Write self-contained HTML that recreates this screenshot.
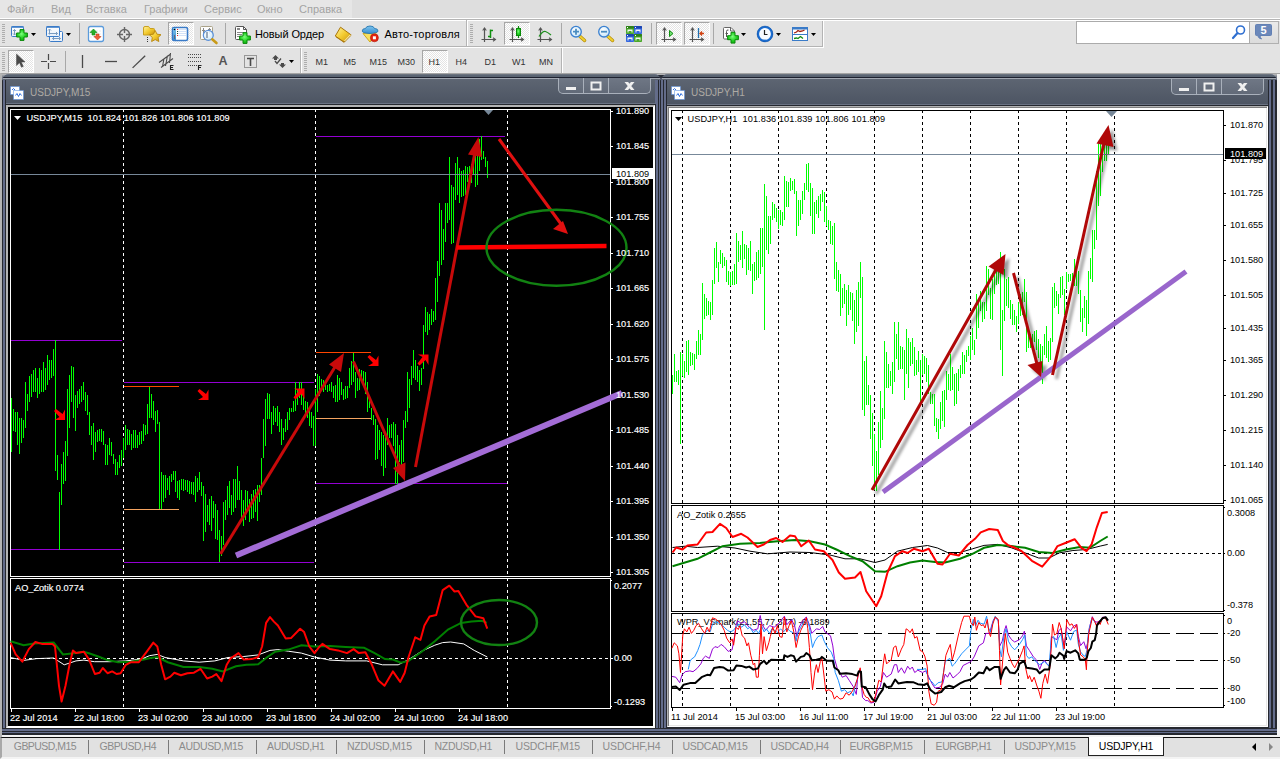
<!DOCTYPE html>
<html lang="ru"><head><meta charset="utf-8"><title>MetaTrader 4 - USDJPY</title>
<style>
html,body{margin:0;padding:0}
body{width:1280px;height:759px;overflow:hidden;position:relative;background:#e3e3e3;font-family:"Liberation Sans",sans-serif;font-size:11px;color:#000}
div,span,svg,i,b{position:absolute;box-sizing:border-box;font-style:normal}
#menubar{left:0;top:0;width:1280px;height:21px;background:linear-gradient(#dedede 18px,#fff 18px,#fff 19px,#b4b4b4 19px,#b4b4b4 20px,#fff 20px)}
#menubar .strip{left:0;top:0;width:352px;height:18px;background:#e6e6e6}
#menubar span{top:2px;font-size:11px;line-height:14px;color:#a3a3a3;white-space:nowrap}
.tb{background:#e3e3e3}
#tb1{left:0;top:20px;width:824px;height:28px;box-shadow:inset 0 1px 0 #fff,inset -1px -1px 0 #fff,inset -2px -2px 0 #b4b4b4}
#tb2{left:0;top:48px;width:563px;height:25px;box-shadow:inset -1px 0 0 #fff,inset -2px 0 0 #b4b4b4}
.grip{width:3px;height:19px;background:repeating-linear-gradient(to bottom,#adadad 0,#adadad 1px,transparent 1px,transparent 2px)}
.sep2{width:2px;background:linear-gradient(to right,#b4b4b4 1px,#fff 1px)}
.sep{width:1px;background:#a8a8a8}
.pressed{border:1px solid;border-color:#a6a6a6 #fff #fff #a6a6a6;background:repeating-conic-gradient(#fff 0 25%,#e4e4e4 0 50%) 0 0/2px 2px}
.lbl{font-size:11px;letter-spacing:0.1px;line-height:14px;white-space:nowrap;color:#000}
.tf{font-size:9px;line-height:12px;color:#333;white-space:nowrap}
.dd{width:0;height:0;border-left:3px solid transparent;border-right:3px solid transparent;border-top:3px solid #000}
#search{left:1076px;top:21px;width:174px;height:23px;background:#fff;border:1px solid #ababab}
#chatbtn{left:1250px;top:21px;width:29px;height:23px;background:linear-gradient(#eaeaea,#dcdcdc);border:1px solid #b0b0b0;border-left:none}
#chatbtn b{left:0;top:2px;width:27px;text-align:center;font-size:11px;line-height:12px;color:#fff}
#mdi{left:0;top:0;width:1280px;height:0}
#mdibg{left:0;top:73px;width:1280px;height:665px;background:#f4f4f4;border-top:1px solid #a4a4a4;border-bottom:1px solid #111;border-left:2px solid #b4b4b4}
.win{background:#636c8a;border-radius:7px 7px 0 0;overflow:hidden}
.win .bot{left:0;bottom:0;height:7px;background:linear-gradient(#25282f 0,#25282f 1px,#636c8a 1px,#636c8a 3px,#25282f 3px,#25282f 4px,#636c8a 4px,#636c8a 5px,#25282f 5px)}
.win .cap{background:linear-gradient(#7d838c 0,#5a6472 1px,#5a6472 3px,#1e2230 3px,#1e2230 4px,#a0a6b0 4px,#a0a6b0 5px,#5d6572 5px,#4d5563 calc(100% - 2px),#6a7282 calc(100% - 2px),#6a7282 calc(100% - 1px),#2a2e3a calc(100% - 1px));border-radius:7px 7px 0 0}
.win .ttl{top:12px;font-size:10px;line-height:13px;color:#aeaaa4;white-space:nowrap}
.win .btns{height:16px;border:1px solid #a9b0bb;border-top:none;border-radius:0 0 5px 5px;background:linear-gradient(#6f7785,#626a78)}
.win .btns i{top:0;bottom:0;width:1px;background:#a9b0bb}
.win .client{border:2px solid;border-color:#b4b4b4 #fff #fff #b4b4b4;box-shadow:0 0 0 1px #25282f;background:#000}
.win .client.lt{background:#fff;border-width:1px;padding:1px;box-shadow:inset 1px 1px 0 #808080,inset -1px -1px 0 #e6e6e6,0 0 0 1px #25282f}
.win .capline{height:0}
.chart{position:absolute;display:block}
.ic{position:absolute;display:block;overflow:visible}
#tabs{left:0;top:738px;width:1280px;height:21px;background:#e1e1e1;border-bottom:2px solid #f4f4f4;border-left:2px solid #a8a8a8}
#tabs span{top:2px;font-size:10.5px;letter-spacing:-0.35px;line-height:13px;color:#8b8b8b;white-space:nowrap}
#tabs i{top:2px;width:1px;height:14px;background:#7a7a7a}
#tabs .act{top:-1px;height:19px;letter-spacing:-0.24px;background:#fff;border:1px solid #222;border-top:none;color:#000;text-align:center;line-height:19px}
</style></head>
<body>
<div id="menubar"><div class="strip"></div>
<span style="left:7px;">Файл</span>
<span style="left:51px;">Вид</span>
<span style="left:86px;">Вставка</span>
<span style="left:144px;">Графики</span>
<span style="left:204px;">Сервис</span>
<span style="left:257px;">Окно</span>
<span style="left:299px;">Справка</span>
</div>
<div id="tb1" class="tb">
<div class="grip" style="left:2px;top:4px"></div>
<div class="sep" style="left:79px;top:3px;height:21px"></div>
<div class="pressed" style="left:168px;top:2px;width:26px;height:23px"></div>
<div class="sep" style="left:225px;top:3px;height:21px"></div>
<span class="lbl" style="left:255px;top:7px;letter-spacing:-0.1px">Новый Ордер</span>
<span class="lbl" style="left:384.500px;top:7px;letter-spacing:0.22px">Авто-торговля</span>
<div class="sep2" style="left:466px;top:0;height:26px"></div>
<div class="grip" style="left:470px;top:4px"></div>
<div class="pressed" style="left:504px;top:2px;width:26px;height:23px"></div>
<div class="sep" style="left:561px;top:3px;height:21px"></div>
<div class="sep" style="left:651px;top:3px;height:21px"></div>
<div class="pressed" style="left:656px;top:2px;width:26px;height:23px"></div>
<div class="pressed" style="left:684px;top:2px;width:26px;height:23px"></div>
<div class="sep" style="left:713px;top:3px;height:21px"></div>
</div>
<svg class="ic" width="825" height="27" viewBox="0 20 825 27" style="left:0;top:20px"><defs><radialGradient id="gp" cx="0.45" cy="0.4" r="0.7"><stop offset="0" stop-color="#7dff7d"/><stop offset="0.55" stop-color="#22d022"/><stop offset="1" stop-color="#0ea00e"/></radialGradient><linearGradient id="gw" x1="0" y1="0" x2="0" y2="1"><stop offset="0" stop-color="#ffffff"/><stop offset="1" stop-color="#e6eef8"/></linearGradient><linearGradient id="gy" x1="0" y1="0" x2="1" y2="1"><stop offset="0" stop-color="#fff2a0"/><stop offset="0.5" stop-color="#f4cc30"/><stop offset="1" stop-color="#c8900c"/></linearGradient><linearGradient id="gb" x1="0" y1="0" x2="0" y2="1"><stop offset="0" stop-color="#7cc4ee"/><stop offset="1" stop-color="#3a8fd0"/></linearGradient><radialGradient id="gl" cx="0.4" cy="0.35" r="0.8"><stop offset="0" stop-color="#ffffff"/><stop offset="1" stop-color="#bfe2f8"/></radialGradient></defs><rect x="11.500" y="26.500" width="12" height="10" rx="1" fill="url(#gw)" stroke="#3a7bc8"/><path d="M11.500 27H23.500" stroke="#3a7bc8" stroke-width="1.600"/><path d="M14.500 29.500v5.500M13 31l1.500-1.500l1.500 1.500M13 33.500l1.500 1.500l1.500-1.500" stroke="#7a9cc0" fill="none"/><path d="M20 29.6h4v3.4h3.4v4h-3.4v3.4h-4v-3.4h-3.4v-4h3.4z" fill="url(#gp)" stroke="#0c8a0c" stroke-width="1"/><path d="M31 33h5l-2.500 3z" fill="#000"/><rect x="49.500" y="31.500" width="13" height="10" rx="1" fill="url(#gw)" stroke="#3a7bc8"/><rect x="46.500" y="26.500" width="13" height="10" rx="1" fill="url(#gw)" stroke="#3a7bc8"/><path d="M46.500 27H59.500" stroke="#3a7bc8" stroke-width="1.600"/><path d="M49.500 29.500v5M48.500 33.500H57.500M48 30.500l1.500-1.500l1.500 1.500M56 32l1.500 1.500l-1.500 1.500M52.500 38.500h8M54 37l-1.500 1.500l1.500 1.500M59 37l1.500 1.500l-1.500 1.500" stroke="#7a9cc0" fill="none"/><path d="M66 33h5l-2.500 3z" fill="#000"/><rect x="88.500" y="26.500" width="15" height="15" rx="2" fill="#fff" stroke="#5b9bdc" stroke-width="1.300"/><path d="M90 31h12M90 34h12M90 37h12" stroke="#e4e8ee" stroke-dasharray="2 1"/><path d="M90 32.500l3.500-3.500l3.500 3.500h-2v2.500h-3v-2.500z" fill="#28b028" stroke="#108a10" stroke-width="0.600"/><path d="M94 36.500h2v-2.500h3v2.500h2l-3.500 3.500z" fill="#f06038" stroke="#c83810" stroke-width="0.600"/><circle cx="124.500" cy="34.500" r="5" fill="none" stroke="#666" stroke-width="1.400"/><path d="M124.500 27v6M124.500 36v6M117 34.500h6M126 34.500h6" stroke="#666" stroke-width="1.400"/><path d="M143.500 28q0-1.500 1.500-1.500h3q1 0 1.500 1l0.500 1h3.500q1 0 1 1v5.500h-11z" fill="url(#gy)" stroke="#c8a020"/><path d="M147.500 37v5" stroke="#333" stroke-dasharray="1 1"/><path d="M155.200 30.500l1.800 3.700l4 0.500l-2.900 2.800l0.700 4l-3.600-1.900l-3.600 1.900l0.700-4l-2.900-2.800l4-0.500z" fill="url(#gy)" stroke="#b8860b" stroke-width="0.900"/><rect x="172.500" y="27.500" width="15" height="13" rx="1.500" fill="#fff" stroke="#3a7bc8" stroke-width="1.600"/><rect x="173" y="28" width="3" height="12" fill="url(#gb)"/><circle cx="174.500" cy="29.500" r="0.800" fill="#000"/><path d="M174.500 35v4" stroke="#667"/><path d="M178 29.500h8M178 31.500h8M178 33.500h8M178 35.500h8" stroke="#d4e2f8"/><path d="M177 29.500h1M177 35.500h1" stroke="#f02020"/><path d="M177 31.500h1M177 33.500h1" stroke="#205020"/><rect x="200.500" y="26.500" width="12" height="13" rx="1" fill="#fdfdfd" stroke="#aaa288"/><path d="M203.500 28v9M209.500 28v6M202 30.500h3M208 29.500h3" stroke="#888"/><circle cx="208.300" cy="35.300" r="5" fill="url(#gl)" fill-opacity="0.900" stroke="#5a90d8" stroke-width="1.200"/><path d="M207 32v6" stroke="#9ab" stroke-width="2"/><path d="M212.200 39.300l4.300 3.700" stroke="#c89a18" stroke-width="2.600" stroke-linecap="round"/><path d="M235.500 27.500q0-1 1-1h7l3 3v9q0 1-1 1h-9q-1 0-1-1z" fill="#fff" stroke="#555"/><path d="M243.500 26.500v3h3" fill="none" stroke="#555"/><rect x="237" y="28" width="3" height="2" fill="#888"/><path d="M237 32.500h7M237 34.500h5M237 36.500h4" stroke="#888"/><path d="M243 32.6h4v3.4h3.4v4h-3.4v3.4h-4v-3.4h-3.4v-4h3.4z" fill="url(#gp)" stroke="#0c8a0c" stroke-width="1"/><path d="M340.500 27.200l10.500 7.600l-7 7.200l-8.700-6z" fill="url(#gy)" stroke="#a87408" stroke-linejoin="round"/><path d="M344.600 41.200l6-6.200" stroke="#fbeeb0" stroke-width="1.500"/><path d="M335.800 36.800l8.400 5.600l6.800-7" fill="none" stroke="#a87408" stroke-width="0.800"/><path d="M363 33.500l13.500-1l-6.500 9.500z" fill="#f8e060" stroke="#d0a818" stroke-linejoin="round"/><path d="M362.200 31q0-2.500 3.300-2.500q0.500-2.500 4.500-2.500t4.500 2.500q3.500 0 3.500 2.500q0 2-8 2.500q-7.800-0.500-7.800-2.500z" fill="url(#gb)" stroke="#2878b0" stroke-width="0.900"/><circle cx="374.400" cy="37.800" r="4" fill="#e42410" stroke="#b01808" stroke-width="0.600"/><rect x="372.900" y="36.300" width="3" height="3" fill="#fff"/><path d="M484.5 28.5V42M481.5 39.5H495.5" stroke="#555" stroke-width="1.200" fill="none"/><path d="M482.7 30.5l1.800 -2.500l1.800 2.500M493 37.7l2.500 1.800l-2.500 1.800" stroke="#555" stroke-width="1.100" fill="none"/><path d="M490.500 29.500V38M488 36.500h2.500M490.500 30.500h2.500" stroke="#109010" stroke-width="1.500" fill="none"/><path d="M512.5 28.5V42M509.5 39.5H523.5" stroke="#555" stroke-width="1.200" fill="none"/><path d="M510.7 30.5l1.800 -2.500l1.800 2.500M521 37.7l2.500 1.800l-2.500 1.800" stroke="#555" stroke-width="1.100" fill="none"/><path d="M518.500 26v12" stroke="#0a8a0a" stroke-width="1.200"/><rect x="516.500" y="28.500" width="4" height="7" fill="url(#gp)" stroke="#0a8a0a"/><path d="M540.5 28.5V42M537.5 39.5H551.5" stroke="#555" stroke-width="1.200" fill="none"/><path d="M538.7 30.5l1.800 -2.500l1.800 2.500M549 37.7l2.500 1.800l-2.500 1.800" stroke="#555" stroke-width="1.100" fill="none"/><path d="M539 36.500q4-6 6.500-5t5.500 3.500" fill="none" stroke="#209020" stroke-width="1.300"/><path d="M579.8 36.300l4.800 4.200" stroke="#b8900c" stroke-width="3.400" stroke-linecap="round"/><path d="M579.8 36.300l4.800 4.200" stroke="#f0d030" stroke-width="1.800" stroke-linecap="round"/><circle cx="576" cy="31.700" r="5.300" fill="url(#gl)" stroke="#3a80d0" stroke-width="1.300"/><path d="M573 31.700h6M576 28.700v6" stroke="#4a8cc0" stroke-width="1.800" fill="none"/><path d="M607.8 36.300l4.800 4.200" stroke="#b8900c" stroke-width="3.400" stroke-linecap="round"/><path d="M607.8 36.300l4.800 4.200" stroke="#f0d030" stroke-width="1.800" stroke-linecap="round"/><circle cx="604" cy="31.700" r="5.300" fill="url(#gl)" stroke="#3a80d0" stroke-width="1.300"/><path d="M601 31.700h6" stroke="#4a8cc0" stroke-width="1.800" fill="none"/><rect x="626" y="26" width="8" height="8" rx="0.800" fill="#4aa82a"/><rect x="626" y="26" width="8" height="2.500" rx="0.800" fill="#2e8018"/><path d="M627.5 29.5h5v3h-1v-1.500h-3v1.500h-1z" fill="#f4f8f4"/><rect x="627" y="27" width="1" height="1" fill="#fff"/><rect x="634" y="26" width="8" height="8" rx="0.800" fill="#3468e0"/><rect x="634" y="26" width="8" height="2.500" rx="0.800" fill="#1c44b0"/><path d="M635.5 29.5h5v3h-1v-1.500h-3v1.500h-1z" fill="#f4f8f4"/><rect x="635" y="27" width="1" height="1" fill="#fff"/><rect x="626" y="34" width="8" height="8" rx="0.800" fill="#3468e0"/><rect x="626" y="34" width="8" height="2.500" rx="0.800" fill="#1c44b0"/><path d="M627.5 37.5h5v3h-1v-1.500h-3v1.500h-1z" fill="#f4f8f4"/><rect x="627" y="35" width="1" height="1" fill="#fff"/><rect x="634" y="34" width="8" height="8" rx="0.800" fill="#4aa82a"/><rect x="634" y="34" width="8" height="2.500" rx="0.800" fill="#2e8018"/><path d="M635.5 37.5h5v3h-1v-1.500h-3v1.500h-1z" fill="#f4f8f4"/><rect x="635" y="35" width="1" height="1" fill="#fff"/><path d="M664.5 28.5V42M661.5 39.5H675.5" stroke="#555" stroke-width="1.200" fill="none"/><path d="M662.7 30.5l1.800 -2.500l1.800 2.500M673 37.7l2.500 1.800l-2.500 1.800" stroke="#555" stroke-width="1.100" fill="none"/><path d="M669.500 30.500l3.500 3l-3.500 3z" fill="#70e070" stroke="#109010"/><path d="M692.5 28.5V42M689.5 39.5H703.5" stroke="#555" stroke-width="1.200" fill="none"/><path d="M690.7 30.5l1.800 -2.500l1.800 2.500M701 37.7l2.500 1.800l-2.500 1.800" stroke="#555" stroke-width="1.100" fill="none"/><path d="M698.500 28v10" stroke="#2070b0" stroke-width="1.300"/><path d="M704 33.500h-4M702 31.500l-2 2l2 2" fill="none" stroke="#d04010" stroke-width="1.300"/><path d="M723.500 28.500q0-1 1-1h6.500l3.500 3.500v7q0 1-1 1h-9q-1 0-1-1z" fill="#fff" stroke="#666"/><path d="M730.500 27.500v3.500h3.500" fill="none" stroke="#666"/><path d="M728.500 30q-2-0.500-2 1.500v5.500M725.500 33.500h2.500" fill="none" stroke="#555"/><path d="M731 32.3h4v3.4h3.4v4h-3.4v3.4h-4v-3.4h-3.4v-4h3.4z" fill="url(#gp)" stroke="#0c8a0c" stroke-width="1"/><path d="M741 33h5l-2.500 3z" fill="#000"/><circle cx="765" cy="34" r="7" fill="#f8fbff" stroke="#1a6cd0" stroke-width="2.200"/><circle cx="765" cy="34" r="7.900" fill="none" stroke="#0c4ca0" stroke-width="0.500"/><path d="M764.500 30v4.500h3" fill="none" stroke="#222" stroke-width="1.200"/><path d="M765 39v1" stroke="#6aa0e0"/><path d="M776 33h5l-2.500 3z" fill="#000"/><rect x="792.500" y="27.500" width="15" height="13" fill="#fff" stroke="#3a7bc8"/><rect x="792" y="27" width="16" height="2.500" fill="#3a7bc8"/><path d="M793 34.500h14" stroke="#3a7bc8"/><path d="M794 33l2.500-1l1.500-1.500l2 1l2.500-0.500l2-1" fill="none" stroke="#a02010" stroke-width="1.300"/><path d="M794 38.500l2.500-0.500l1.500 0.500l2.500-2l2.500 2" fill="none" stroke="#108a10" stroke-width="1.300"/><path d="M811 33h5l-2.500 3z" fill="#000"/></svg>
<div id="search"><svg class="ic" width="14" height="14" viewBox="0 0 14 14" style="left:155px;top:3px"><circle cx="8.500" cy="5" r="4" fill="#fff" stroke="#2f6fd0" stroke-width="1.600"/><path d="M5.500 8l-4.500 5" stroke="#2f6fd0" stroke-width="2.200" stroke-linecap="round"/></svg></div>
<div id="chatbtn"><svg class="ic" width="17" height="16" viewBox="0 0 17 16" style="left:5px;top:2px"><path d="M1.500 0.500h14q1 0 1 1v9q0 1-1 1h-10.500q0 2 1.500 3.500q-3-0.500-4-3.500h-1q-1 0-1-1v-9q0-1 1-1z" fill="#6b88ba" stroke="#6280b4"/></svg><b>5</b></div>
<div id="tb2" class="tb">
<div class="grip" style="left:2px;top:4px"></div>
<div class="pressed" style="left:8px;top:2px;width:26px;height:23px"></div>
<div class="sep" style="left:65px;top:3px;height:21px"></div>
<span class="lbl" style="left:218.500px;top:6px;font-weight:bold;color:#555;font-size:12.500px;line-height:15px">A</span>
<div class="sep2" style="left:300px;top:0;height:26px"></div>
<div class="grip" style="left:304px;top:4px"></div>
<div class="pressed" style="left:422px;top:2px;width:26px;height:23px"></div>
<span class="tf" style="left:315.5px;top:8px">M1</span>
<span class="tf" style="left:343.5px;top:8px">M5</span>
<span class="tf" style="left:369.5px;top:8px">M15</span>
<span class="tf" style="left:397.5px;top:8px">M30</span>
<span class="tf" style="left:428.5px;top:8px">H1</span>
<span class="tf" style="left:455.5px;top:8px">H4</span>
<span class="tf" style="left:484.5px;top:8px">D1</span>
<span class="tf" style="left:512px;top:8px">W1</span>
<span class="tf" style="left:539px;top:8px">MN</span>
</div>
<svg class="ic" width="562" height="26" viewBox="0 48 562 26" style="left:0;top:48px"><path d="M16.500 54v11.500l3-2.800l2 4.500l1.800-0.800l-2-4.400h3.700z" fill="#4a4a4a" stroke="#4a4a4a" stroke-width="0.500"/><path d="M48.500 54v6M48.500 63v6M41 61.500h6M50 61.500h6" stroke="#4a4a4a" stroke-width="1.200"/><path d="M82.500 55v13" stroke="#4a4a4a" stroke-width="1.300"/><path d="M105 61.500h12" stroke="#4a4a4a" stroke-width="1.300"/><path d="M132.600 67.900L145.200 55.800" stroke="#4a4a4a" stroke-width="1.300"/><path d="M159 62.500l11-8M161 67.500l12-9M162.500 66.500l1.500-8M165.500 66l2-10.500M169.500 63l1-10" stroke="#4a4a4a" fill="none" stroke-width="1.100"/><path d="M173.500 65.500h-3v4h3M170.500 67.500h2.500" stroke="#222" stroke-width="1.100" fill="none"/><path d="M188 54.500h13M188 57.500h13M188 61.500h13M188 65.500h9" stroke="#4a4a4a" stroke-dasharray="1 1"/><path d="M201.500 65.500h-3v4.500M198.500 67.500h2.500" stroke="#222" stroke-width="1.100" fill="none"/><rect x="244.500" y="55.500" width="12" height="12" fill="none" stroke="#4a4a4a" stroke-dasharray="1 1"/><path d="M247 58.500h7M250.500 58.500v7.500" stroke="#4a4a4a" stroke-width="1.600"/><path d="M275.500 55l3.500 3.500h-2v1.500h-3v-1.500h-2z" fill="#4a4a4a"/><path d="M275 61l2 2.500l4-5" stroke="#4a4a4a" stroke-width="1.300" fill="none"/><path d="M282.500 68l3.500-3.500h-2v-1.500h-3v1.500h-2z" fill="#4a4a4a"/><path d="M289 60h5l-2.500 3z" fill="#000"/></svg>
<div id="mdibg"><div style="left:0;top:0;width:1275px;height:10px;background:linear-gradient(#c0c0c0,#8a8e96 2px,#6a707c 4px)"></div><div style="left:655px;top:1px;width:10px;height:9px;background:#2a2e38"></div></div>
<div id="mdi">
<div class="win" style="left:2px;top:74px;width:659px;height:661px"><div class="cap" style="left:0;top:0;width:659px;height:31px"></div><div class="capline" style="left:1px;top:3px;width:657px"></div><div class="stripe" style="left:0;top:6px;width:4px;height:654px;background:linear-gradient(to right,#25282f 0px,#25282f 1px,#636c8a 1px,#636c8a 2px,#636c8a 2px,#636c8a 3px,#25282f 3px,#25282f 4px)"></div><div class="stripe" style="left:653px;top:6px;width:6px;height:654px;background:linear-gradient(to right,#636c8a 0px,#636c8a 1px,#636c8a 1px,#636c8a 2px,#636c8a 2px,#636c8a 3px,#25282f 3px,#25282f 4px,#636c8a 4px,#636c8a 5px,#25282f 5px,#25282f 6px)"></div><svg class="ic" width="14" height="14" viewBox="0 0 14 14" style="left:8px;top:12px"><rect x="0.5" y="0.5" width="9" height="8" fill="#fff" stroke="#4a86e0" stroke-dasharray="1 1"/><rect x="3.5" y="4.5" width="10" height="9" fill="#fff" stroke="#4a86e0" stroke-dasharray="1 1"/><path d="M2 4l1.500-1.500l1.500 1.500M5.500 9.500l1.500-2l1.500 3l1.500-3l1.500 2" fill="none" stroke="#2f6fe0"/></svg><div class="ttl" style="left:28px">USDJPY,M15</div><div class="btns" style="left:556px;top:4px;width:93px"><i style="left:24px"></i><i style="left:49px"></i><svg class="ic" width="92" height="16" viewBox="0 0 92 16" style="left:0;top:0"><path d="M7 9h10v3h-10z" fill="#f0f0f0"/><path d="M32.500 4.500h9v7h-9z" fill="none" stroke="#f0f0f0" stroke-width="2"/><path d="M65.500 4h3.600l6.400 8h-3.600zM71.900 4h3.600l-6.400 8h-3.600z" fill="#f0f0f0"/></svg></div><div class="bot" style="width:659px"></div><div class="client" style="left:4px;top:31px;width:649px;height:623px"></div></div>
<div class="win" style="left:661px;top:74px;width:616px;height:661px"><div class="cap" style="left:0;top:0;width:616px;height:32px"></div><div class="capline" style="left:1px;top:3px;width:614px"></div><div class="stripe" style="left:0;top:6px;width:6px;height:654px;background:linear-gradient(to right,#636c8a 0px,#636c8a 1px,#636c8a 1px,#636c8a 2px,#25282f 2px,#25282f 3px,#636c8a 3px,#636c8a 4px,#636c8a 4px,#636c8a 5px,#25282f 5px,#25282f 6px)"></div><div class="stripe" style="left:607px;top:6px;width:9px;height:654px;background:linear-gradient(to right,#25282f 0px,#25282f 1px,#636c8a 1px,#636c8a 2px,#636c8a 2px,#636c8a 3px,#25282f 3px,#25282f 4px,#25282f 4px,#25282f 5px,#636c8a 5px,#636c8a 6px,#636c8a 6px,#636c8a 7px,#25282f 7px,#25282f 8px,#25282f 8px,#25282f 9px)"></div><svg class="ic" width="14" height="14" viewBox="0 0 14 14" style="left:10px;top:12px"><rect x="0.5" y="0.5" width="9" height="8" fill="#fff" stroke="#4a86e0" stroke-dasharray="1 1"/><rect x="3.5" y="4.5" width="10" height="9" fill="#fff" stroke="#4a86e0" stroke-dasharray="1 1"/><path d="M2 4l1.500-1.500l1.500 1.500M5.500 9.500l1.500-2l1.500 3l1.500-3l1.500 2" fill="none" stroke="#2f6fe0"/></svg><div class="ttl" style="left:30px">USDJPY,H1</div><div class="btns" style="left:510px;top:5px;width:93px"><i style="left:24px"></i><i style="left:49px"></i><svg class="ic" width="92" height="16" viewBox="0 0 92 16" style="left:0;top:0"><path d="M7 9h10v3h-10z" fill="#f0f0f0"/><path d="M32.500 4.500h9v7h-9z" fill="none" stroke="#f0f0f0" stroke-width="2"/><path d="M65.500 4h3.600l6.400 8h-3.600zM71.900 4h3.600l-6.400 8h-3.600z" fill="#f0f0f0"/></svg></div><div class="bot" style="width:616px"></div><div class="client lt" style="left:6px;top:32px;width:601px;height:621px"></div></div>
</div>
<svg class="chart" width="645" height="619" viewBox="8 107 645 619" style="left:8px;top:107px">
<rect x="8" y="107" width="645" height="619" fill="#000"/>
<g shape-rendering="crispEdges" fill="none">
<path d="M123.5 109V576M123.5 578V708" stroke="#fff" stroke-dasharray="3 3"/>
<path d="M315.5 109V576M315.5 578V708" stroke="#fff" stroke-dasharray="3 3"/>
<path d="M507.5 109V576M507.5 578V708" stroke="#fff" stroke-dasharray="3 3"/>
<path d="M10.5 109.5H610.5V576.5H10.5ZM10.5 578.5H610.5V708.5H10.5Z" stroke="#fff"/>
<path d="M611 111.5h2M611 146.5h2M611 182.5h2M611 217.5h2M611 253.5h2M611 288.5h2M611 324.5h2M611 359.5h2M611 395.5h2M611 430.5h2M611 466.5h2M611 501.5h2M611 537.5h2M611 572.5h2M611 580.5h1M611 658.5h2M611 706.5h1M11.5 709v3M75.5 709v3M139.5 709v3M203.5 709v3M267.5 709v3M331.5 709v3M395.5 709v3M459.5 709v3" stroke="#fff"/>
<path d="M11 340.5H122M11 549.5H122M124 382.5H314M124 562.5H314M316 136.5H505M316 483.5H507" stroke="#9400d3"/>
<path d="M124 386.5H179M316 352.5H371" stroke="#ff4500"/>
<path d="M124 509.5H179M316 418.5H371" stroke="#f4a460"/>
<path d="M11.5 398V452M13.5 409V431M15.5 412V432M17.5 412V445M19.5 418V454M21.5 418V443M23.5 420V438M25.5 382V428M27.5 394V411M29.5 376V402M31.5 374V397M33.5 370V392M35.5 368V392M37.5 378V398M39.5 368V394M41.5 370V392M43.5 362V392M45.5 368V390M47.5 355V385M49.5 360V380M51.5 360V378M53.5 349V376M55.5 340V471M57.5 455V480M59.5 492V550M61.5 464V505M63.5 452V484M65.5 441V481M67.5 389V456M69.5 375V428M71.5 366V402M73.5 367V418M75.5 395V431M77.5 391V408M79.5 389V404M81.5 386V402M83.5 382V400M85.5 392V411M87.5 395V415M89.5 412V435M91.5 426V445M93.5 423V460M95.5 432V452M97.5 430V442M99.5 429V441M101.5 429V442M103.5 431V445M105.5 444V465M107.5 445V465M109.5 438V455M111.5 442V456M113.5 454V464M115.5 459V475M117.5 462V475M119.5 455V468M121.5 450V466M123.5 438V458M125.5 425V450M127.5 429V445M129.5 430V445M131.5 434V450M133.5 430V448M135.5 430V448M137.5 435V448M139.5 432V445M141.5 431V444M143.5 424V441M145.5 425V435M147.5 404V434M149.5 387V418M151.5 394V418M153.5 401V420M155.5 411V432M157.5 410V424M159.5 422V509M161.5 472V509M163.5 475V502M165.5 475V498M167.5 478V490M169.5 476V495M171.5 474V482M173.5 471V480M175.5 471V492M177.5 481V498M179.5 480V500M181.5 479V490M183.5 479V491M185.5 480V490M187.5 480V492M189.5 481V494M191.5 482V494M193.5 482V495M195.5 476V502M197.5 478V492M199.5 472V490M201.5 482V496M203.5 486V541M205.5 494V532M207.5 505V522M209.5 499V525M211.5 496V531M213.5 501V518M215.5 504V539M217.5 510V540M219.5 530V562M221.5 536V556M223.5 502V545M225.5 500V520M227.5 486V515M229.5 481V508M231.5 495V515M233.5 479V512M235.5 479V508M237.5 466V500M239.5 481V500M241.5 490V520M243.5 500V526M245.5 490V520M247.5 491V510M249.5 499V522M251.5 494V519M253.5 490V518M255.5 489V512M257.5 485V521M259.5 485V502M261.5 458V495M263.5 419V458M265.5 399V446M267.5 393V419M269.5 394V419M271.5 412V434M273.5 406V425M275.5 408V422M277.5 406V426M279.5 412V432M281.5 419V445M283.5 428V440M285.5 419V432M287.5 412V430M289.5 408V420M291.5 408V412M293.5 401V412M295.5 382V411M297.5 389V405M299.5 382V398M301.5 382V405M303.5 396V410M305.5 401V415M307.5 402V418M309.5 410V426M311.5 412V428M313.5 416V446M315.5 389V446M317.5 374V412M319.5 376V396M321.5 379V391M323.5 380V392M325.5 384V390M327.5 385V392M329.5 384V391M331.5 382V392M333.5 386V398M335.5 385V402M337.5 375V402M339.5 378V400M341.5 382V395M343.5 389V400M345.5 386V399M347.5 386V398M349.5 368V388M351.5 361V385M353.5 353V382M355.5 372V398M357.5 378V391M359.5 369V390M361.5 370V382M363.5 371V385M365.5 372V394M367.5 382V412M369.5 400V408M371.5 408V420M373.5 415V425M375.5 419V460M377.5 425V459M379.5 430V450M381.5 432V466M383.5 435V476M385.5 432V468M387.5 418V445M389.5 425V438M391.5 424V438M393.5 422V446M395.5 424V484M397.5 435V484M399.5 445V462M401.5 440V468M403.5 420V462M405.5 411V428M407.5 372V422M409.5 379V408M411.5 366V385M413.5 350V378M415.5 360V380M417.5 366V382M419.5 370V391M421.5 368V385M423.5 325V369M425.5 307V332M427.5 312V335M429.5 314V330M431.5 309V325M433.5 311V322M435.5 278V320M437.5 261V302M439.5 203V276M441.5 210V265M443.5 229V260M445.5 203V242M447.5 203V223M449.5 157V220M451.5 185V244M453.5 187V243M455.5 163V200M457.5 157V195M459.5 168V203M461.5 171V197M463.5 170V196M465.5 166V195M467.5 167V182M469.5 166V178M471.5 164V183M473.5 158V175M475.5 153V187M477.5 152V185M479.5 139V171M481.5 136V160M483.5 151V159M485.5 157V167M487.5 161V178" stroke="#00ff00"/>
<path d="M11 174.5H610" stroke="#778899"/>
<path d="M11 658.5H610" stroke="#fff" stroke-dasharray="3 3"/>
</g>
<path d="M484 110h9l-4.5 5z" fill="#778899"/>
<polyline points="10.5,657.5 23.6,660.4 36.7,658.6 53.7,658 64.2,664.8 76,660.9 83.9,660.1 94.4,661.7 110.1,661.7 125.8,660.9 141.5,659.1 149.4,655.7 157.3,654.4 165.1,657.5 183.5,660.9 199.2,662.2 214.9,660.9 228,657.5 243.8,656.5 258.2,654.9 270,650.4 277.9,649.6 288.3,651.2 301.4,653.1 314.5,657 330,660.1 345.7,660.9 366.7,660.9 382.4,664.8 398.2,664.8 408.6,659.6 421.7,651.2 434.8,645.2 442.7,642.6 450.6,642 463.7,643.9 474.2,650.4 487.3,657" fill="none" stroke="#fff" stroke-width="1"/>
<polyline points="10.5,641.3 23.6,645.2 34.1,643.4 53.7,642.6 62.9,654.4 76,653.1 83.9,651.7 90.4,653.8 99.6,657 107.5,660.1 118,662.2 131.1,661.7 141.5,660.1 149.4,658.3 157.3,657 167.8,662.2 183.5,666.9 199.2,666.9 212.3,668.8 222.8,671.4 235.9,666.2 246.4,664.8 258.2,664.3 267.4,657 275.2,651.7 288.3,649.6 301.4,645.2 314.5,646.5 330,646 345.7,647 364.1,647.8 374.6,653.1 385,659.1 392.9,659.6 400.8,662.8 408.6,660.9 421.7,651.7 434.8,641.3 448,629.5 461.1,622.9 471.5,621.6 482,620.8 486.7,622.9" fill="none" stroke="#008000" stroke-width="2"/>
<polyline points="10.5,642.6 15.7,654.4 22.3,661.7 28.8,649.1 35.4,642 41.9,643.9 52.4,643.9 55,646.5 59,685.8 61.6,701.5 65.5,685.8 69.5,664.8 72.9,650.4 76,653.1 83.9,651.7 89.1,659.6 94.9,674 99.6,672.7 102.8,668 107.5,673.2 112.2,671.4 116.6,674 120.6,673.2 125.8,664.8 131.1,662.2 138.9,662.2 146.8,651.7 153.3,642.6 157.3,646.5 161.2,664.8 165.1,679.3 170.4,676.6 174.3,672.7 180.9,675.3 187.4,673.2 194,672.7 200.5,668.8 207.1,678.5 212.3,676.6 216.3,674 221.5,681.1 226.7,664.8 230.7,658.3 238.5,653.1 243.8,659.6 251.6,659.1 258.2,657 262.1,646.5 266.1,622.9 270,617.1 273.9,621.6 277.9,625.5 285.7,638.6 291,638.1 300.1,628.7 304.1,632.1 309.3,646.5 314.5,653.1 318.5,647.8 322.4,643.9 330,649.1 337.9,650.4 347,653.1 353.6,649.1 358.8,653.1 365.4,652.3 371.9,664.8 378.5,680.6 384.5,685.8 392.9,671.4 400.2,681.9 404.7,672.7 408.6,657 415.2,637.3 420.4,639.9 424.4,625.5 429.6,616.4 436.2,615 442.7,590.1 449.3,585.7 454.5,591.5 458.4,590.9 466.3,604.6 475.5,616.4 483.3,618.2 487.3,628.7" fill="none" stroke="#ff0000" stroke-width="2" stroke-linejoin="round"/>
<g fill="#ff0000">
<path transform="translate(59.5 414.5) rotate(0)" d="M5.500 5.500V-5L3 -0.500L-3.500 -5.500L-5.500 -3.500L0 2.500L-5 5.500Z"/>
<path transform="translate(203 394.5) rotate(0)" d="M5.500 5.500V-5L3 -0.500L-3.500 -5.500L-5.500 -3.500L0 2.500L-5 5.500Z"/>
<path transform="translate(373 360.5) rotate(0)" d="M5.500 5.500V-5L3 -0.500L-3.500 -5.500L-5.500 -3.500L0 2.500L-5 5.500Z"/>
<path transform="translate(299 394) rotate(-90)" d="M5.500 5.500V-5L3 -0.500L-3.500 -5.500L-5.500 -3.500L0 2.500L-5 5.500Z"/>
<path transform="translate(423 360) rotate(-90)" d="M5.500 5.500V-5L3 -0.500L-3.500 -5.500L-5.500 -3.500L0 2.500L-5 5.500Z"/>
</g>
<g stroke-linecap="butt">
<path d="M236 555.5L622 393" stroke="#a36cd6" stroke-width="6" fill="none"/>
<path d="M220.5 554L338 362" stroke="#c80a0a" stroke-width="3" fill="none"/>
<path d="M344 353l-3 19l-12-7.5z" fill="#c80a0a"/>
<path d="M353.5 361.5L402 472" stroke="#c80a0a" stroke-width="3" fill="none"/>
<path d="M405 481l-12-13l12.500-5.500z" fill="#c80a0a"/>
<path d="M415.500 467L475 152" stroke="#c80a0a" stroke-width="3" fill="none"/>
<path d="M478.500 137l3.500 20l-14-2.500z" fill="#c80a0a"/>
<path d="M499 139L561 224" stroke="#e01010" stroke-width="3" fill="none"/>
<path d="M568 234l-15-5l10-8z" fill="#e01010"/>
<path d="M456.500 247.500L606.500 246" stroke="#ff0000" stroke-width="4.500" fill="none"/>
<ellipse cx="556.500" cy="247.800" rx="70" ry="38" stroke="#128212" stroke-width="2.400" fill="none"/>
<ellipse cx="499" cy="622.500" rx="38" ry="22.500" stroke="#128212" stroke-width="2.400" fill="none"/>
</g>
<g fill="#fff" stroke="#fff" stroke-width="0.15" style="font-family:'Liberation Sans',sans-serif;font-size:9.2px;white-space:pre">
<path d="M14 116h7l-3.500 4z" stroke="none"/>
<text xml:space="preserve" x="26.400" y="121" textLength="203.300">USDJPY,M15  101.824 101.826 101.806 101.809</text>
<text xml:space="preserve" x="15" y="591">AO_Zotik 0.0774</text>
<text xml:space="preserve" x="616" y="114.3">101.890</text>
<text xml:space="preserve" x="616" y="149.3">101.845</text>
<text xml:space="preserve" x="616" y="185.3">101.800</text>
<text xml:space="preserve" x="616" y="220.3">101.755</text>
<text xml:space="preserve" x="616" y="256.3">101.710</text>
<text xml:space="preserve" x="616" y="291.3">101.665</text>
<text xml:space="preserve" x="616" y="327.3">101.620</text>
<text xml:space="preserve" x="616" y="362.3">101.575</text>
<text xml:space="preserve" x="616" y="398.3">101.530</text>
<text xml:space="preserve" x="616" y="433.3">101.485</text>
<text xml:space="preserve" x="616" y="469.3">101.440</text>
<text xml:space="preserve" x="616" y="504.3">101.395</text>
<text xml:space="preserve" x="616" y="540.3">101.350</text>
<text xml:space="preserve" x="616" y="575.3">101.305</text>
<text xml:space="preserve" x="614" y="589.3">0.2077</text>
<text xml:space="preserve" x="614" y="661.3">0.00</text>
<text xml:space="preserve" x="614" y="705.3">-0.1293</text>
<text xml:space="preserve" x="10" y="721.3">22 Jul 2014</text>
<text xml:space="preserve" x="74" y="721.3">22 Jul 18:00</text>
<text xml:space="preserve" x="138" y="721.3">23 Jul 02:00</text>
<text xml:space="preserve" x="202" y="721.3">23 Jul 10:00</text>
<text xml:space="preserve" x="266" y="721.3">23 Jul 18:00</text>
<text xml:space="preserve" x="330" y="721.3">24 Jul 02:00</text>
<text xml:space="preserve" x="394" y="721.3">24 Jul 10:00</text>
<text xml:space="preserve" x="458" y="721.3">24 Jul 18:00</text>
</g>
<rect x="612" y="168" width="41" height="11" fill="#fff"/>
<text xml:space="preserve" x="616" y="177.3" fill="#000" style="font-family:'Liberation Sans',sans-serif;font-size:9.2px;white-space:pre">101.809</text>
</svg>
<svg class="chart" width="597" height="617" viewBox="669 108 597 617" style="left:669px;top:108px">
<rect x="669" y="108" width="597" height="617" fill="#fff"/>
<g shape-rendering="crispEdges" fill="none">
<path d="M682.5 110V503M682.5 505V611M682.5 613V707" stroke="#000" stroke-dasharray="3 3"/>
<path d="M730.5 110V503M730.5 505V611M730.5 613V707" stroke="#000" stroke-dasharray="3 3"/>
<path d="M778.5 110V503M778.5 505V611M778.5 613V707" stroke="#000" stroke-dasharray="3 3"/>
<path d="M826.5 110V503M826.5 505V611M826.5 613V707" stroke="#000" stroke-dasharray="3 3"/>
<path d="M874.5 110V503M874.5 505V611M874.5 613V707" stroke="#000" stroke-dasharray="3 3"/>
<path d="M922.5 110V503M922.5 505V611M922.5 613V707" stroke="#000" stroke-dasharray="3 3"/>
<path d="M970.5 110V503M970.5 505V611M970.5 613V707" stroke="#000" stroke-dasharray="3 3"/>
<path d="M1018.5 110V503M1018.5 505V611M1018.5 613V707" stroke="#000" stroke-dasharray="3 3"/>
<path d="M1066.5 110V503M1066.5 505V611M1066.5 613V707" stroke="#000" stroke-dasharray="3 3"/>
<path d="M1114.5 110V503M1114.5 505V611M1114.5 613V707" stroke="#000" stroke-dasharray="3 3"/>
<path d="M671.5 110.5H1223.5V503.5H671.5ZM671.5 505.5H1223.5V611.5H671.5ZM671.5 613.5H1223.5V707.5H671.5Z" stroke="#000"/>
<path d="M1224 125.5h2M1224 160.5h2M1224 193.5h2M1224 225.5h2M1224 260.5h2M1224 295.5h2M1224 328.5h2M1224 360.5h2M1224 395.5h2M1224 430.5h2M1224 465.5h2M1224 500.5h2M1224 507.5h1M1224 553.5h1M1224 610.5h1M1224 615.5h1M1224 633.5h1M1224 660.5h1M1224 688.5h1M1224 705.5h1M672.5 708v3M736.5 708v3M800.5 708v3M864.5 708v3M928.5 708v3M992.5 708v3M1056.5 708v3" stroke="#000"/>
<path d="M672.5 375V394M674.5 354V382M676.5 371V382M678.5 370V385M680.5 352V444M682.5 354V376M684.5 361V378M686.5 341V372M688.5 340V375M690.5 352V366M692.5 353V365M694.5 354V370M696.5 341V359M698.5 330V355M700.5 334V355M702.5 283V340M704.5 294V319M706.5 298V316M708.5 301V315M710.5 302V320M712.5 280V315M714.5 248V284M716.5 242V268M718.5 262V282M720.5 250V264M722.5 253V268M724.5 257V266M726.5 260V282M728.5 271V285M730.5 272V286M732.5 271V285M734.5 264V285M736.5 233V284M738.5 241V262M740.5 245V260M742.5 231V268M744.5 244V259M746.5 245V275M748.5 248V270M750.5 241V271M752.5 264V294M754.5 262V281M756.5 252V280M758.5 250V278M760.5 228V274M762.5 228V267M764.5 184V330M766.5 196V250M768.5 216V254M770.5 216V244M772.5 202V220M774.5 204V218M776.5 208V222M778.5 210V229M780.5 210V225M782.5 212V226M784.5 176V220M786.5 181V207M788.5 182V207M790.5 178V191M792.5 181V190M794.5 179V194M796.5 191V236M798.5 200V226M800.5 200V220M802.5 191V214M804.5 183V200M806.5 164V190M808.5 163V192M810.5 183V216M812.5 188V234M814.5 202V234M816.5 200V214M818.5 196V218M820.5 194V211M822.5 190V202M824.5 192V222M826.5 206V226M828.5 220V230M830.5 221V244M832.5 226V245M834.5 223V279M836.5 262V291M838.5 270V292M840.5 274V316M842.5 288V308M844.5 284V304M846.5 290V326M848.5 285V315M850.5 292V310M852.5 293V321M854.5 300V344M856.5 290V332M858.5 282V326M860.5 262V298M862.5 277V410M864.5 361V416M866.5 356V405M868.5 385V405M870.5 395V439M872.5 413V466M874.5 434V490M876.5 451V491M878.5 422V475M880.5 391V448M882.5 408V440M884.5 341V419M886.5 352V388M888.5 364V388M890.5 371V386M892.5 362V394M894.5 322V382M896.5 334V359M898.5 322V370M900.5 346V369M902.5 347V369M904.5 350V400M906.5 329V374M908.5 338V388M910.5 342V366M912.5 338V364M914.5 347V376M916.5 360V375M918.5 351V372M920.5 360V402M922.5 354V375M924.5 356V374M926.5 358V382M928.5 365V394M930.5 392V404M932.5 394V404M934.5 394V426M936.5 418V432M938.5 419V439M940.5 402V429M942.5 391V421M944.5 390V427M946.5 371V400M948.5 374V390M950.5 354V391M952.5 367V390M954.5 374V406M956.5 373V404M958.5 369V391M960.5 365V378M962.5 352V374M964.5 355V374M966.5 350V362M968.5 346V356M970.5 336V360M972.5 328V350M974.5 340V355M976.5 294V339M978.5 302V328M980.5 291V311M982.5 302V322M984.5 302V319M986.5 266V311M988.5 269V295M990.5 288V319M992.5 279V320M994.5 275V294M996.5 271V285M998.5 266V284M1000.5 252V350M1002.5 310V376M1004.5 269V321M1006.5 279V306M1008.5 277V308M1010.5 300V319M1012.5 304V325M1014.5 310V325M1016.5 316V332M1018.5 302V324M1020.5 294V316M1022.5 292V315M1024.5 279V302M1026.5 292V352M1028.5 329V348M1030.5 334V348M1032.5 334V342M1034.5 331V342M1036.5 330V350M1038.5 339V358M1040.5 344V368M1042.5 346V384M1044.5 334V355M1046.5 326V358M1048.5 341V362M1050.5 338V360M1052.5 287V342M1054.5 283V308M1056.5 291V306M1058.5 294V314M1060.5 277V298M1062.5 276V295M1064.5 289V315M1066.5 272V289M1068.5 274V282M1070.5 274V281M1072.5 273V286M1074.5 259V286M1076.5 271V286M1078.5 271V294M1080.5 290V322M1082.5 308V332M1084.5 296V318M1086.5 300V336M1088.5 271V324M1090.5 258V279M1092.5 230V282M1094.5 230V249M1096.5 171V240M1098.5 144V206M1100.5 144V196M1102.5 150V172M1104.5 140V161M1106.5 139V161M1108.5 140V155" stroke="#00ff00"/>
<path d="M672 154.500H1223" stroke="#778899"/>
<path d="M672 553.500H1223" stroke="#000" stroke-dasharray="3 3"/>
<path d="M672 633.500H1223M672 660.500H1223M672 688.500H1223" stroke="#000" stroke-dasharray="18 6"/>
</g>
<path d="M1106 111h11l-5.500 6z" fill="#778899"/>
<g fill="#000" style="font-family:'Liberation Sans',sans-serif;font-size:9.2px;white-space:pre"><text xml:space="preserve" x="677" y="518">AO_Zotik 0.2655</text><text xml:space="preserve" x="677" y="625">WPR_VSmark(21,55,77,377) -6.1889</text></g>
<polyline points="672.5,547.5 685,546.2 697.5,547.5 717.5,546.2 735,548 750,551.2 767.5,553.8 790,552 810,552.5 830,555 845,558.8 860,558.8 875,562.5 885,560 897.5,551.2 912.5,547.5 927.5,545.5 937.5,548 947.5,552.5 960,552.5 972.5,548.8 984.1,545.4 997.8,544.4 1011.4,547.8 1025.1,552.9 1038.7,558 1049,558 1059.2,552.9 1072.9,550.5 1086.5,549.5 1100.2,546.1 1107.7,544.4" fill="none" stroke="#000" stroke-width="1"/>
<polyline points="672.5,566.2 685,562.5 697.5,558.8 710,552.5 722.5,546.2 740,543.8 760,543 777.5,541.2 795,540 810,541.2 825,544.5 837.5,550 850,556.2 862.5,561.2 875,571.2 885,571.8 897.5,566.2 910,562.5 922.5,560.5 935,562 945,562.5 960,558.8 972.5,553.8 984.1,547.8 997.8,545.1 1011.4,546.1 1025.1,547.8 1038.7,551.9 1052.4,552.9 1066,549.5 1079.7,547.1 1089.9,547.8 1100.2,541 1107.7,536.5" fill="none" stroke="#008000" stroke-width="2"/>
<polyline points="672.5,552.5 676.2,547.5 682.5,549.5 687.5,545.5 697.5,544.5 706.2,532.5 712.5,532 720,523.8 726.2,528 732.5,537 741.2,533.8 747.5,537.5 757.5,547 763.8,544.5 770,540 776.2,538 782.5,542 790,535.5 795,536.2 801.2,546.2 808.8,540.5 815,549.5 823.8,551.2 832.5,560 838.8,572.5 845,578.8 855,577.5 860.5,572 866.2,591.2 876.2,606.2 881.2,596.2 887.5,572.5 895,556.2 902.5,551.2 907.5,553 913.8,548.8 922.5,551.2 928.8,548.8 937.5,563.8 942.5,564.5 950,553.8 958.8,555.5 967.5,545 975,538.8 980.7,532.4 989.2,529 997.8,530 1002.9,541 1008,545.1 1014.8,547.8 1021.7,551.2 1031.9,560.8 1042.2,566.6 1052.4,554.6 1057.5,546.1 1066,542.7 1074.6,539.2 1081.4,547.8 1086.5,551.2 1091.6,544.4 1096.8,527.3 1101.9,513 1107.7,511.9" fill="none" stroke="#ff0000" stroke-width="2" stroke-linejoin="round"/>
<polyline points="671.9,676.4 675.8,677.2 679.7,682.7 682.1,674.8 685.2,671.7 689.9,670.9 693,671.7 696.9,668.6 700.8,663.9 703.2,658.4 705.5,656.1 709.4,658.4 712.5,649.1 714.9,646.7 718,647.5 721.1,644.4 724.2,646.7 728.2,651.4 732.1,649.8 734.4,637.3 736,625.6 737.5,620.9 741.4,623.3 744.6,621.7 749.2,627.2 753.2,630.3 757.8,628.8 760.2,615.5 761.8,624.1 765.7,630.3 769.6,625.6 774.2,627.2 778.9,623.3 784.4,616.2 786.8,624.8 791.4,619.4 794.6,625.6 796.9,636.6 799.2,627.2 802.4,620.9 806.3,617 809.4,624.8 811.8,633.4 816.4,628.8 819.6,629.5 822.7,626.4 825,631.9 830.5,635.8 832.8,645.9 834.4,658.4 837.5,669.4 839.9,672.5 842.2,677.2 846.1,675.6 849.2,680.3 853.2,686.6 856.3,694.4 857.8,675.6 860.2,669.4 862.5,697.5 865.7,700.6 867.8,700.6 870.9,703 874.1,702.2 877.2,691.2 880.3,686.6 883.4,672.5 886.6,677.2 891.2,674.1 894.4,664.7 896.7,664.7 898.3,672.5 901.4,667.8 904.5,673.3 907.7,666.2 910,669.4 912.3,667 914.7,672.5 917.8,670.2 922.5,672.5 925.6,670.9 928.8,677.2 931.9,683.4 935,688.1 939.7,687.3 942.8,683.4 945.2,674.1 947.5,677.2 949.8,672.5 953,678 956.9,674.8 960,671.7 963.1,665.5 967.8,663.1 970.9,661.6 974.1,656.9 978.8,645.9 983.4,642.8 985.8,633.4 989.7,633.4 991.2,627.2 993.6,619.4 995.9,617.8 998.3,620.9 999.8,645.9 1002.2,641.2 1004.5,630.3 1006.1,625.6 1008.4,635 1011.6,639.7 1014.7,642 1019.4,639.7 1022.5,635.8 1024.4,631.1 1026.4,645.9 1029.5,650.6 1033.4,656.9 1036.6,660 1039.7,669.4 1042,663.1 1044.4,660 1047.5,664.7 1049.8,666.2 1051.4,636.6 1053.8,638.1 1056.9,639.7 1058.8,630.8 1061.1,628.4 1063.4,643.3 1065,640.9 1066.6,626.9 1070.5,630.8 1073.6,626.1 1076.7,624.5 1078.3,636.2 1080.6,645.6 1083.8,641.7 1086.1,648.8 1087.7,642.5 1089.2,628.4 1092.3,616.7 1094.7,621.4 1097,622.2 1100.2,620.6 1102.5,617.2 1105.6,617.2 1108,619.8" fill="none" stroke="#9400d3" stroke-width="1"/>
<polyline points="688.3,669.4 689.9,661.6 691.4,659.2 694.6,656.9 697.7,650.6 700,644.4 702.4,635 704.7,632.7 707.8,630.3 710.2,631.9 712.5,624.1 714.9,621.7 719.6,623.3 724.2,627.2 727.4,630.3 730.5,631.9 733.6,630.3 736.8,625.6 739.1,624.1 741.4,627.2 744.6,624.8 747.7,628.8 750,627.2 753.2,632.7 756.3,630.3 758.6,633.4 761.8,626.4 764.1,631.9 766.4,628.8 769.6,633.4 771.9,628.8 775.8,631.1 777.4,632.7 780.5,628.8 783.6,631.9 786.8,628 789.9,631.1 794.6,633.4 796.1,641.2 797.7,633.4 800.8,627.2 803.9,621.7 807.1,619.4 809.4,627.2 811,638.1 812.5,647.5 814.9,641.2 818,636.6 821.9,635 824.2,641.2 827.4,647.5 831.3,652.2 833.6,658.4 835.2,672.5 838.3,680.3 841.4,691.2 844.6,689.7 847.7,692.8 850.8,691.2 853.2,695.9 855.5,683.4 857.8,678.8" fill="none" stroke="#1e90ff" stroke-width="1"/>
<polyline points="917,669.4 922.5,669.4 925.6,668.6 928.8,678.8 931.9,681.9 935,685.8 938.1,682.7 942,681.9 945.2,661.6 947.5,660 949.8,658.4 952.2,666.2 954.5,663.9 958.4,658.4 961.6,653.8 966.2,649.1 969.4,645.9 970.9,630.3 973.3,619.4 975.6,625.6 978,620.2 980.3,623.3 984.2,624.1 986.6,616.2 988.1,627.2 990.5,631.9 992.8,622.5 995.2,616.2 998.3,620.9 999.8,649.1 1001.4,656.9 1003.8,636.6 1006.1,628.8 1008.4,641.2 1011.6,646.7 1014.7,649.8 1019.4,644.4 1022.5,639.7 1024.8,635 1026.4,655.3 1028.8,658.4 1031.9,656.9 1034.2,660 1039.7,664.7 1044.4,661.6 1049.1,666.2 1051.4,638.1 1053.8,636.6 1056.1,647.5 1058.4,638.1 1061.1,633.9 1063.4,650.3 1065,644.1 1066.6,631.6 1070.5,640.2 1073.6,631.6 1076.7,630 1078.3,644.1 1080.6,651.9 1083,655 1085.3,656.6 1086.9,650.3 1088.4,633.1 1091.6,619.1 1093.9,620.6 1096.2,624.5 1099.4,621.4 1102.5,617.5 1105.6,617.5 1108,619.8" fill="none" stroke="#1e90ff" stroke-width="1"/>
<polyline points="671.9,648.3 674.2,642.8 677.4,645.9 678.9,653.8 680.5,672.5 682.8,635 684.4,628.8 686.8,631.9 689.1,627.2 691.4,633.4 693.8,630.3 696.1,625.6 698.5,623.3 701.6,628.8 704.7,633.4 707.1,627.2 709.4,631.9 712.5,617.8 716.4,619.4 721.1,624.1 724.2,630.3 726.6,638.1 729.7,642.8 732.1,638.9 733.6,645.2 736,627.2 738.3,629.5 739.9,625.6 742.2,635.8 744.6,638.1 746.9,645.9 748.5,642.8 750.8,655.3 753.2,664.7 754.7,663.1 756.3,677.2 758.3,677.2 759.4,655.3 761,624.1 762.5,653.8 764.1,636.6 766.4,650.6 768.8,642.8 770.3,636.6 772.7,627.2 775,633.4 777.4,625.6 779.7,636.6 782.1,637.3 784.4,617 786.8,631.9 789.1,625.6 791.4,620.9 793.8,631.9 796.1,647.5 798.5,636.6 800.8,630.3 803.9,624.1 806.3,617.8 807.8,628.8 809.4,647.5 811,672.5 812.5,689.7 814.9,670.9 816.4,664.7 818,672.5 820.3,661.6 821.9,658.4 824.2,677.2 825.8,691.2 828.9,689.7 832.1,692 834.4,699.1 836.8,695.9 839.9,699.1 843,698.3 846.1,692.8 849.2,695.2 852.4,691.2 855.5,685 857.8,677.2 860.2,667.8 861.8,686.6 864.1,694.4 866.4,697.5 867.8,697.5 870.9,702.2 874.1,701.4 876.4,691.2 878.8,680.3 881.1,681.9 883.4,663.1 884.7,653.8 886.6,663.9 888.9,661.6 891.2,660 893.6,647.5 895.9,645.9 898.3,656.9 901.4,649.1 903.8,644.4 906.1,628.8 908.4,630.3 910,632.7 912.3,628.8 914.7,638.1 917,636.6 920.2,650.6 922.5,651.4 924.8,656.1 927.2,666.2 928.8,691.2 931.1,703.8 934.2,705.3 936.6,702.2 938.1,691.2 941.2,689.7 943.6,672.5 945.9,655.3 948.3,649.1 950.3,644.4 952.2,660 954.5,652.2 958.4,635 961.6,622.5 963.9,616.2 969.4,616.2 970.9,622.5 973.3,625.6 974.8,617 976.4,630.3 978.8,622.5 981.1,625.6 983.4,624.8 985,628 987.3,619.4 988.9,631.9 990.5,636.6 992.8,624.1 995.2,617 998.3,619.4 999.5,650.6 1000.6,685 1003,656.9 1005.3,633.4 1007.7,652.2 1010,658.4 1012.3,663.9 1014.7,667.8 1017,663.1 1019.4,658.4 1022.5,650.6 1024.1,645.9 1025.6,667.8 1028,678.8 1029.5,675.6 1031.9,681.9 1034.2,677.2 1036.6,685 1038.9,691.2 1040.9,698.3 1042.8,683.4 1045.2,674.1 1047.5,683.4 1049.8,667.8 1051.4,645.9 1052.5,624.1 1054.5,635 1056.9,633.4 1059.2,622.5 1061.1,628.4 1062.7,638.6 1064.2,648.8 1065.8,631.6 1066.9,619.8 1069.7,625.3 1072,623.8 1074.4,628.4 1076.7,624.5 1078.3,639.4 1080.6,655 1083,656.6 1085.3,659.7 1086.4,669.8 1087.2,651.9 1088.8,633.1 1090,628.4 1092.3,617.5 1094.7,621.4 1096.2,625.3 1098.6,621.4 1100.2,624.5 1102.5,617.5 1105.6,618.3 1108.3,624.5" fill="none" stroke="#ff0000" stroke-width="1"/>
<polyline points="671.9,686.9 675.8,686.6 679.7,690 683.6,684.7 689.9,683.1 695.3,683.1 701.6,677.2 707.1,674.8 710.2,675.3 714.1,668.1 719.6,667 723.5,667.5 728.2,670.6 733.6,670.2 736.4,665.5 741.4,665.9 746.1,667.5 749.2,666.6 753.2,669.4 757.8,668.6 760.2,663.9 764.1,660.8 766.4,663.9 771.1,659.7 777.4,660 783.6,659.7 784.4,655.3 787.5,656.9 790.7,655.3 793.8,656.1 796.1,661.6 800.8,656.9 803.9,656.1 806.3,653 809.4,655.3 811.8,660.3 816.4,659.7 820.3,658.8 821.9,656.9 824.2,658.8 826.6,660.8 832.8,660.8 834.4,667.5 838.3,670.2 839.9,673.8 846.1,673.3 852.4,674.1 857.1,675.6 858.9,671.2 861,671.7 861.8,686.6 865.7,687.3 869.4,694.4 872.5,699.1 875.6,701.4 878.8,695.2 882.7,689.7 884.2,683.4 886.6,687.3 891.2,686.6 895.2,679.5 898.3,683.4 902.2,682.7 906.9,681.9 913.1,682.2 917.8,684.2 924.1,685 927.2,683.4 930.3,689.7 935,693.6 941.2,692 945.2,687.3 949.1,685.8 953.8,687.3 960,683.4 964.7,681.1 970.9,679.5 974.1,677.2 978.8,672.5 983.4,673.3 986.6,667 989.7,670.2 994.4,667 999.1,667 1000.6,678.8 1003.8,670.2 1006.1,667 1010,672.5 1014.7,673.3 1017.8,669.4 1019.4,663.9 1024.1,660.8 1026.4,667.8 1031.9,668.6 1036.6,669.4 1039.7,673.3 1044.4,669.4 1049.1,669.4 1051.4,655.3 1055.3,658.4 1057.7,656.1 1059.5,652.7 1063.4,655.8 1064.2,658.9 1066.6,651.1 1070.5,652.7 1075.2,650.3 1078.3,653.4 1079.8,659.7 1085.3,659.7 1086.9,657.3 1088.4,651.1 1090.8,648 1092.3,641.7 1094.7,640.2 1096.2,633.1 1097,625.3 1099.4,622.2 1102.5,618.3 1105.6,617.2 1108,620.6" fill="none" stroke="#000" stroke-width="2" stroke-linejoin="round"/>
<defs><filter id="sh" x="-20%" y="-20%" width="140%" height="140%"><feGaussianBlur stdDeviation="1.8"/></filter></defs>
<g transform="translate(4 4)" opacity="0.4" filter="url(#sh)"><path d="M872 490L998 266" stroke="#000" stroke-width="3" fill="none"/><path d="M1005.500 254l-2 21l-15-8.500z" fill="#000"/><path d="M1013.500 273L1037 364" stroke="#000" stroke-width="3" fill="none"/><path d="M1041 377l-13.500-12l15-4z" fill="#000"/><path d="M1052.500 375L1104 143" stroke="#000" stroke-width="3" fill="none"/><path d="M1108.500 125l5 22l-17-3.500z" fill="#000"/></g>
<path d="M883 492L1186 271.500" stroke="#9966cc" stroke-width="5" fill="none"/>
<g><path d="M872 490L998 266" stroke="#b00808" stroke-width="3" fill="none"/><path d="M1005.500 254l-2 21l-15-8.500z" fill="#b00808"/><path d="M1013.500 273L1037 364" stroke="#b00808" stroke-width="3" fill="none"/><path d="M1041 377l-13.500-12l15-4z" fill="#b00808"/><path d="M1052.500 375L1104 143" stroke="#b00808" stroke-width="3" fill="none"/><path d="M1108.500 125l5 22l-17-3.500z" fill="#b00808"/></g>
<g fill="#000" style="font-family:'Liberation Sans',sans-serif;font-size:9.2px;white-space:pre">
<path d="M675 117h7l-3.500 4z"/>
<text xml:space="preserve" x="687.500" y="122" textLength="197.500">USDJPY,H1  101.836 101.839 101.806 101.809</text>
<text xml:space="preserve" x="1230" y="128.3">101.870</text>
<text xml:space="preserve" x="1230" y="163.3">101.795</text>
<text xml:space="preserve" x="1230" y="196.3">101.725</text>
<text xml:space="preserve" x="1230" y="228.3">101.655</text>
<text xml:space="preserve" x="1230" y="263.3">101.580</text>
<text xml:space="preserve" x="1230" y="298.3">101.505</text>
<text xml:space="preserve" x="1230" y="331.3">101.435</text>
<text xml:space="preserve" x="1230" y="363.3">101.365</text>
<text xml:space="preserve" x="1230" y="398.3">101.290</text>
<text xml:space="preserve" x="1230" y="433.3">101.215</text>
<text xml:space="preserve" x="1230" y="468.3">101.140</text>
<text xml:space="preserve" x="1230" y="503.3">101.065</text>
<text xml:space="preserve" x="1227" y="516.3">0.3008</text>
<text xml:space="preserve" x="1227" y="556.3">0.00</text>
<text xml:space="preserve" x="1227" y="608.3">-0.378</text>
<text xml:space="preserve" x="1227" y="624.3">0</text>
<text xml:space="preserve" x="1227" y="636.3">-20</text>
<text xml:space="preserve" x="1227" y="663.3">-50</text>
<text xml:space="preserve" x="1227" y="691.3">-80</text>
<text xml:space="preserve" x="1227" y="704.3">-100</text>
<text xml:space="preserve" x="671" y="720.3">11 Jul 2014</text>
<text xml:space="preserve" x="735" y="720.3">15 Jul 03:00</text>
<text xml:space="preserve" x="799" y="720.3">16 Jul 11:00</text>
<text xml:space="preserve" x="863" y="720.3">17 Jul 19:00</text>
<text xml:space="preserve" x="927" y="720.3">21 Jul 03:00</text>
<text xml:space="preserve" x="991" y="720.3">22 Jul 11:00</text>
<text xml:space="preserve" x="1055" y="720.3">23 Jul 19:00</text>
</g>
<rect x="1225" y="148" width="41" height="11" fill="#000"/>
<text xml:space="preserve" x="1230" y="157.3" fill="#fff" style="font-family:'Liberation Sans',sans-serif;font-size:9.2px;white-space:pre">101.809</text>
</svg>
<div id="tabs">
<span style="left:11.75px;letter-spacing:-0.54px">GBPUSD,M15</span>
<span style="left:97.5px;letter-spacing:-0.46px">GBPUSD,H4</span>
<span style="left:176.75px;letter-spacing:-0.34px">AUDUSD,M15</span>
<span style="left:265px;letter-spacing:-0.35px">AUDUSD,H1</span>
<span style="left:345px;letter-spacing:-0.23px">NZDUSD,M15</span>
<span style="left:432.5px;letter-spacing:-0.29px">NZDUSD,H1</span>
<span style="left:513.5px;letter-spacing:-0.14px">USDCHF,M15</span>
<span style="left:600.5px;letter-spacing:-0.1px">USDCHF,H4</span>
<span style="left:680.5px;letter-spacing:-0.27px">USDCAD,M15</span>
<span style="left:768.5px;letter-spacing:-0.27px">USDCAD,H4</span>
<span style="left:847.5px;letter-spacing:-0.33px">EURGBP,M15</span>
<span style="left:933.5px;letter-spacing:-0.37px">EURGBP,H1</span>
<span style="left:1012.5px;letter-spacing:-0.24px">USDJPY,M15</span>
<i style="left:86px"></i>
<i style="left:166px"></i>
<i style="left:254px"></i>
<i style="left:334px"></i>
<i style="left:422px"></i>
<i style="left:502px"></i>
<i style="left:590px"></i>
<i style="left:670px"></i>
<i style="left:758px"></i>
<i style="left:838px"></i>
<i style="left:922px"></i>
<i style="left:1002px"></i>
<span class="act" style="left:1086px;width:76px">USDJPY,H1</span>
<div style="left:1250px;top:5px;width:0;height:0;border-top:4px solid transparent;border-bottom:4px solid transparent;border-right:4px solid #000"></div>
<div style="left:1267px;top:5px;width:0;height:0;border-top:4px solid transparent;border-bottom:4px solid transparent;border-left:4px solid #888"></div>
</div>
</body></html>
